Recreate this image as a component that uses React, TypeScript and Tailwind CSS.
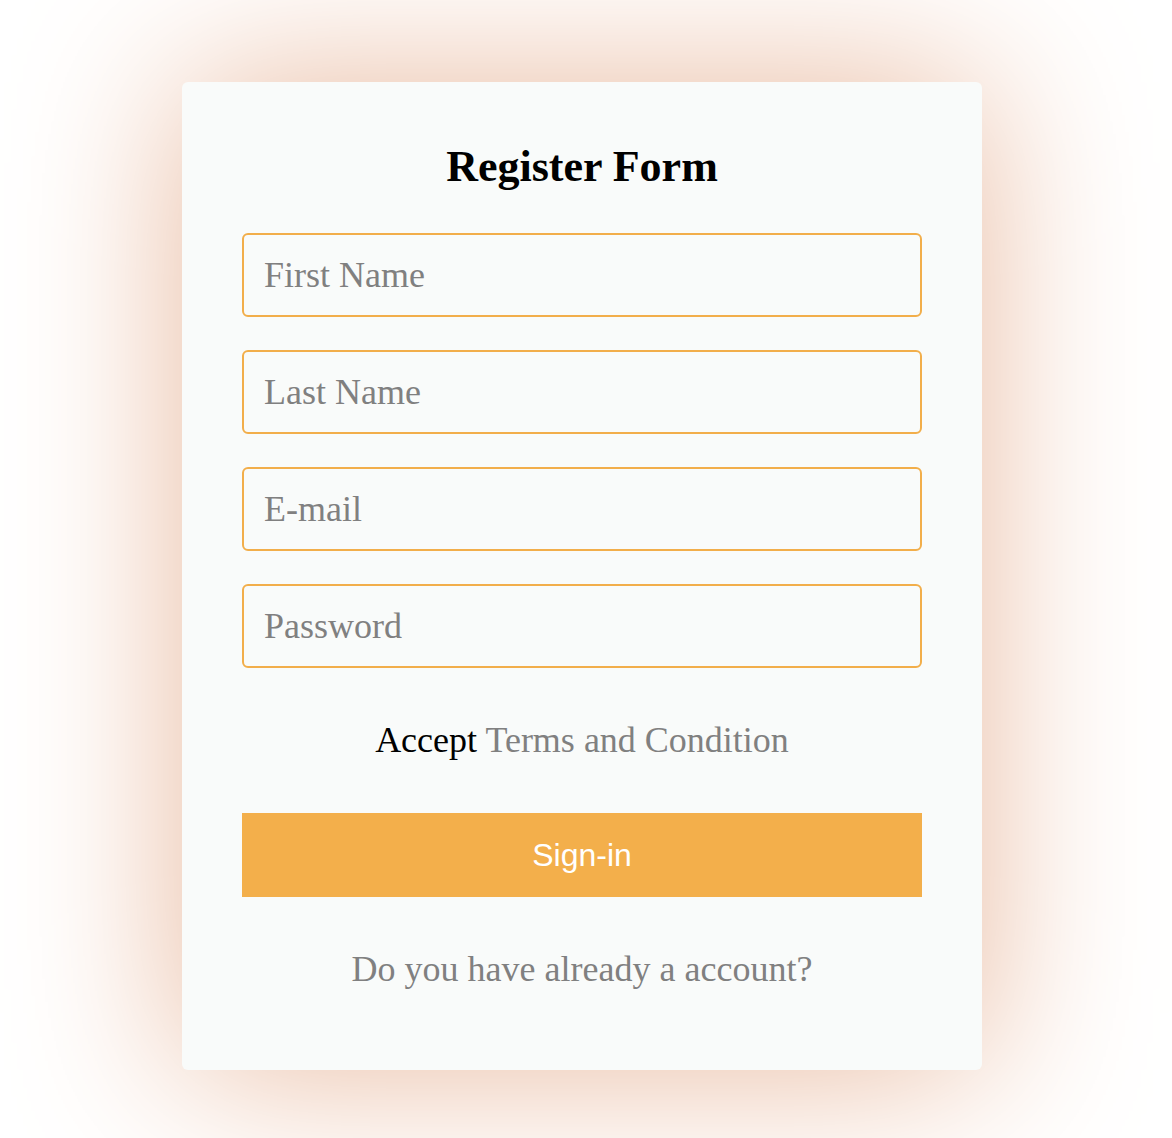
import React from "react";

const fields = ["First Name", "Last Name", "E-mail", "Password"];

export default function App() {
  return (
    <div className="min-h-screen bg-white flex justify-center pr-2 pt-[82px] pb-[68px]">
      {/* Register card */}
      <div className="w-[800px] bg-[#f9fbfa] rounded-md shadow-[0_0_170px_#e8b89d] px-[60px] pt-[60px] pb-[80px] flex flex-col font-['Liberation_Serif',serif]">
        <h1 className="text-[44px] leading-[50px] font-bold text-black text-center">
          Register Form
        </h1>

        <div className="mt-[41px] flex flex-col gap-[33px]">
          {fields.map((f) => (
            <input
              key={f}
              type={f === "Password" ? "password" : "text"}
              placeholder={f}
              className="h-[84px] w-full rounded-md border-2 border-[#f2ae4a] bg-transparent px-5 text-[36px] leading-[41px] text-black placeholder:text-[#808080] outline-none"
            />
          ))}
        </div>

        <p className="mt-[52px] text-center text-[36px] leading-[41px] text-black">
          Accept <span className="text-[#808080]">Terms and Condition</span>
        </p>

        <button className="mt-[52px] h-[84px] w-full bg-[#f3af4b] text-white text-[32px] font-['Liberation_Sans',sans-serif]">
          Sign-in
        </button>

        <p className="mt-[52px] text-center text-[36px] leading-[41px] text-[#808080]">
          Do you have already a account?
        </p>
      </div>
    </div>
  );
}
